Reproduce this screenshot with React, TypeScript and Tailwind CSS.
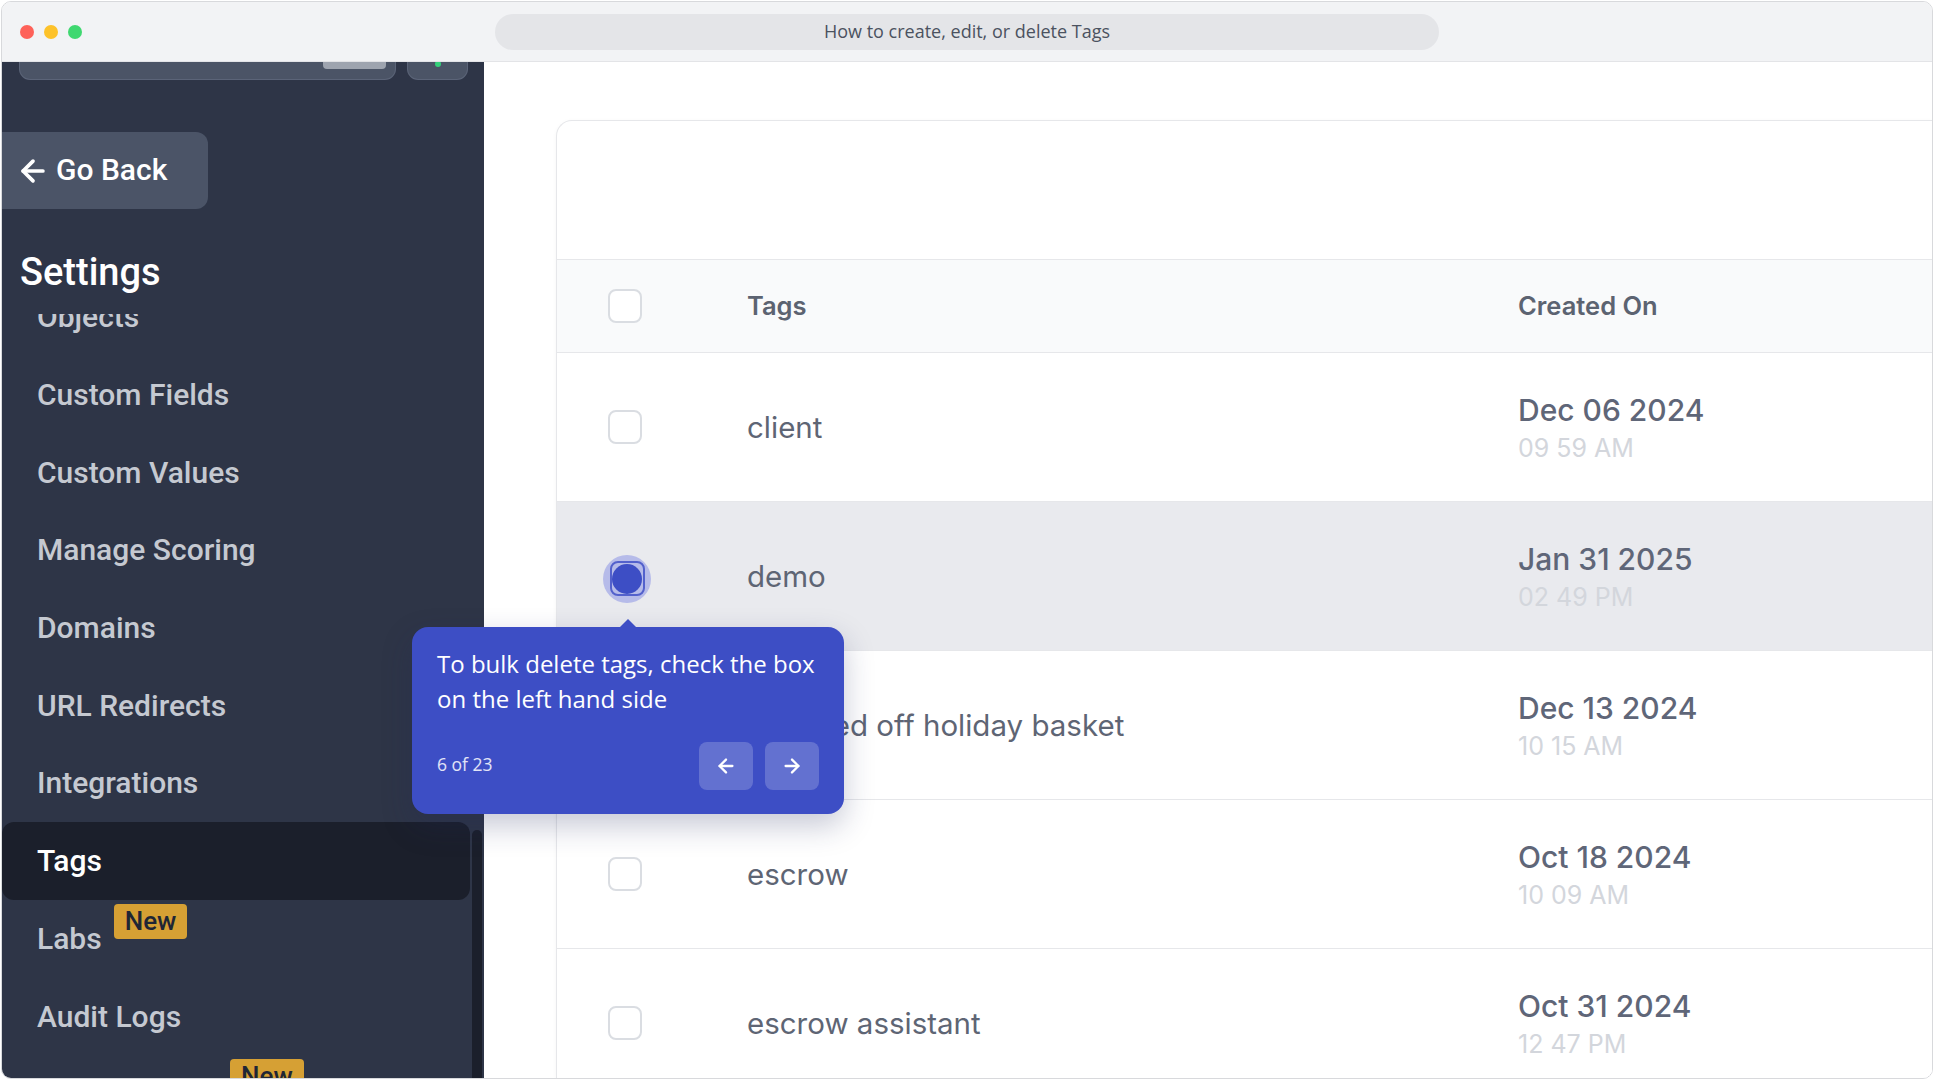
import { ArrowLeft, ArrowRight, Search } from 'lucide-react'

const menu = [
  'Objects',
  'Custom Fields',
  'Custom Values',
  'Manage Scoring',
  'Domains',
  'URL Redirects',
  'Integrations',
  'Tags',
  'Labs',
  'Audit Logs',
  'Brand Boards',
]

const rows = [
  { tag: 'client', date: 'Dec 06 2024', time: '09 59 AM' },
  { tag: 'demo', date: 'Jan 31 2025', time: '02 49 PM', active: true },
  { tag: 'Dropped off holiday basket', date: 'Dec 13 2024', time: '10 15 AM' },
  { tag: 'escrow', date: 'Oct 18 2024', time: '10 09 AM' },
  { tag: 'escrow assistant', date: 'Oct 31 2024', time: '12 47 PM' },
]

function Box() {
  return <div className="h-[34px] w-[34px] rounded-[8px] border-2 border-[#dadde2] bg-white" />
}

function FocusBox() {
  return <div className="-ml-[5px] mt-[5px] flex h-[48px] w-[48px] items-center justify-center rounded-full bg-[#b6bbe9]">
    <div className="flex h-[35px] w-[35px] items-center justify-center rounded-[8px] border-2 border-[#5361cc]">
      <div className="h-[30px] w-[30px] rounded-full bg-[#3d4ec5]" />
    </div>
  </div>
}

function TitleBar() {
  return <div className="grid h-[60px] shrink-0 grid-cols-[1fr_944px_1fr] items-center border-b border-[#e3e4e7] bg-[#f2f3f5]">
    <div className="flex items-center gap-[10px] pl-[18px]">
      <span className="h-[14px] w-[14px] rounded-full bg-[#fe6159]" />
      <span className="h-[14px] w-[14px] rounded-full bg-[#fdc22a]" />
      <span className="h-[14px] w-[14px] rounded-full bg-[#3fd870]" />
    </div>
    <div className="flex h-[36px] items-center justify-center rounded-full bg-[#e4e5e8] text-[18px] text-[#4b5260] [font-family:'Open_Sans',sans-serif]">
      How to create, edit, or delete Tags
    </div>
    <div />
  </div>
}

function Sidebar() {
  return <aside className="relative flex w-[482px] shrink-0 flex-col overflow-hidden bg-[#2e3547] [font-family:Roboto,sans-serif]">
    <div className="-mt-[39px] flex gap-[13px] pl-[18px]">
      <div className="relative flex h-[56px] w-[375px] items-center gap-[12px] rounded-[10px] bg-[#4b5466] px-[30px] shadow-[0_0_0_1px_#5b6478]">
        <Search size={20} className="text-[#9aa1ad]" strokeWidth={2.5} />
        <span className="text-[20px] text-[#9aa1ad]">Search</span>
        <span className="absolute bottom-[10px] right-[9px] h-[30px] w-[63px] rounded-[4px] bg-[#9ea4af]" />
      </div>
      <div className="flex h-[56px] w-[59px] items-end justify-center rounded-[10px] bg-[#4b5466] pb-[12px] shadow-[0_0_0_1px_#5b6478]">
        <span className="h-[6px] w-[6px] rounded-full bg-[#34d17a]" />
      </div>
    </div>

    <div className="mt-[53px] flex h-[77px] w-[206px] items-center gap-[6px] rounded-r-[12px] bg-[#4b5467] pl-[14px] text-[30px] font-medium text-white">
      <ArrowLeft size={34} strokeWidth={2.6} />
      <span className="-mt-[2px]">Go Back</span>
    </div>

    <div className="mt-[40px] pl-[18px] text-[38px] font-medium leading-[46px] text-white">Settings</div>

    <div className="mt-[19px] flex-1 overflow-hidden">
      <div className="-mt-[36px]">
        {menu.map(item => {
          const active = item === 'Tags'
          const isNew = item === 'Labs' || item === 'Brand Boards'
          return <div
            key={item}
            className={active
              ? 'mr-[14px] flex h-[77.7px] items-center rounded-xl bg-[#1b1f2b] pl-[35px] text-[30px] font-medium text-white'
              : 'flex h-[77.7px] items-center pl-[35px] text-[30px] font-medium text-[#c5c9d1]'}
          >
            <span>{item}</span>
            {isNew && <span className="relative -top-[17px] ml-[12px] rounded-[4px] bg-[#d6a034] px-[11px] text-[26px] leading-[35px] text-[#1f2635]">New</span>}
          </div>
        })}
      </div>
    </div>

    <div className="absolute left-[470px] top-[768px] h-[320px] w-[10px] rounded-full bg-[#1b1f2b]" />
  </aside>
}

function Table() {
  return <div className="ml-[72px] mt-[58px] flex-1 rounded-tl-[16px] border border-r-0 border-[#e6e7ea] bg-white shadow-[0_1px_4px_rgba(0,0,0,0.04)] [font-family:Inter,sans-serif]">
    <div className="h-[139px] border-b border-[#e6e7ea]" />
    <div className="flex h-[93px] items-center border-b border-[#e6e7ea] bg-[#f9fafb] text-[25.5px] font-semibold text-[#5c6371]">
      <div className="w-[190px] pl-[51px]"><Box /></div>
      <div className="w-[771px]">Tags</div>
      <div>Created On</div>
    </div>
    {rows.map(r => <div
      key={r.tag}
      className={r.active
        ? 'flex h-[149px] items-center border-b border-[#e6e7ea] bg-[#e9eaee]'
        : 'flex h-[149px] items-center border-b border-[#e6e7ea] bg-white'}
    >
      <div className="w-[190px] pl-[51px]">{r.active ? <FocusBox /> : <Box />}</div>
      <div className="w-[771px] text-[29.5px] text-[#5e6574]">{r.tag}</div>
      <div className="pt-[4px]">
        <div className="text-[30px] font-medium leading-[36px] text-[#5f6678]">{r.date}</div>
        <div className="mt-[2px] text-[25px] leading-[36px] text-[#d3d6dc]">{r.time}</div>
      </div>
    </div>)}
  </div>
}

function Tooltip() {
  return <div className="absolute left-[410px] top-[625px] w-[432px] rounded-[16px] bg-[#3d4ec5] px-[25px] pb-[24px] pt-[19px] text-white shadow-[0_12px_30px_rgba(30,40,90,0.25)] [font-family:'Open_Sans',sans-serif]">
    <div className="absolute -top-[8px] left-[208px] h-0 w-0 border-x-[8px] border-b-[8px] border-x-transparent border-b-[#3d4ec5]" />
    <p className="text-[24px] leading-[35px]">To bulk delete tags, check the box on the left hand side</p>
    <div className="mt-[26px] flex items-center justify-between">
      <span className="-mt-[4px] text-[17.5px] text-white/85">6 of 23</span>
      <div className="flex gap-[12px]">
        <button className="flex h-[48px] w-[54px] items-center justify-center rounded-[8px] bg-white/20">
          <ArrowLeft size={22} strokeWidth={2.5} />
        </button>
        <button className="flex h-[48px] w-[54px] items-center justify-center rounded-[8px] bg-white/20">
          <ArrowRight size={22} strokeWidth={2.5} />
        </button>
      </div>
    </div>
  </div>
}

export default function App() {
  return <div className="h-[1080px] w-[1934px] bg-white p-px">
    <div className="relative flex h-full w-full flex-col overflow-hidden rounded-[10px] border border-[#d8d9dc]">
      <TitleBar />
      <div className="flex min-h-0 flex-1">
        <Sidebar />
        <main className="flex min-w-0 flex-1 overflow-hidden bg-white">
          <Table />
        </main>
      </div>
      <Tooltip />
    </div>
  </div>
}
